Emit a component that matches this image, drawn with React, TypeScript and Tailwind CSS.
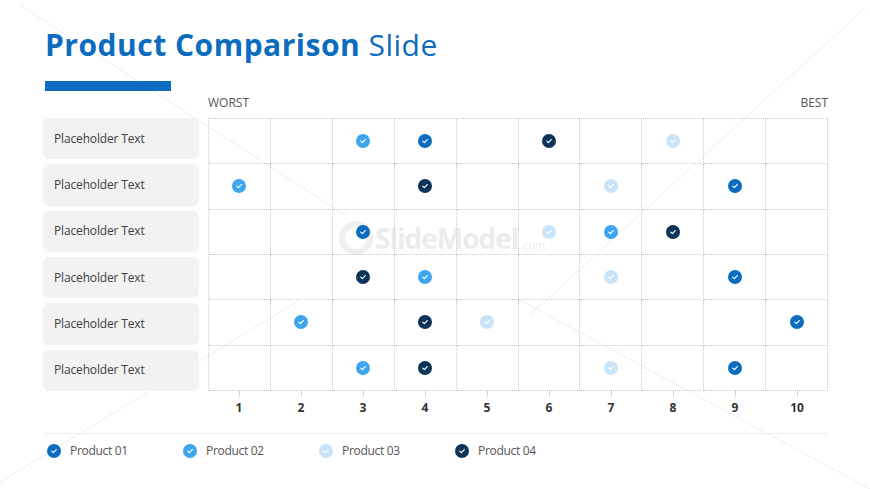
import React from "react";

const COLORS: Record<number, string> = {
  1: "bg-[#0b6cc0]",
  2: "bg-[#3ea6ef]",
  3: "bg-[#c9e4f8]",
  4: "bg-[#0b3558]",
};

// each row: column (1-10) -> product
const rows: Record<number, number>[] = [
  { 3: 2, 4: 1, 6: 4, 8: 3 },
  { 1: 2, 4: 4, 7: 3, 9: 1 },
  { 3: 1, 6: 3, 7: 2, 8: 4 },
  { 3: 4, 4: 2, 7: 3, 9: 1 },
  { 2: 2, 4: 4, 5: 3, 10: 1 },
  { 3: 2, 4: 4, 7: 3, 9: 1 },
];

const cols = [1, 2, 3, 4, 5, 6, 7, 8, 9, 10];

const Check = ({ product }: { product: number }) => (
  <span
    className={`flex w-[14px] h-[14px] rounded-full items-center justify-center ${COLORS[product]}`}
  >
    <svg viewBox="0 0 10 10" className="w-[8px] h-[8px]">
      <path
        d="M2.2 5.2 L4.2 7 L7.8 3.2"
        fill="none"
        stroke="white"
        strokeWidth="1.5"
        strokeLinecap="round"
        strokeLinejoin="round"
      />
    </svg>
  </span>
);

export default function App() {
  return (
    <div
      className="relative w-[870px] h-[489px] overflow-hidden bg-white"
      style={{ fontFamily: '"Open Sans", "Noto Sans", sans-serif' }}
    >
      {/* faint background lines */}
      <svg
        className="absolute inset-0 pointer-events-none"
        width="870"
        height="489"
      >
        <g stroke="#eeeeee" strokeWidth="1">
          <line x1="20" y1="5" x2="345" y2="215" />
          <line x1="0" y1="482" x2="300" y2="300" />
          <line x1="865" y1="8" x2="530" y2="315" />
          <line x1="520" y1="300" x2="870" y2="489" />
        </g>
      </svg>

      <div className="relative flex flex-col pl-[43px] pr-[42px] pt-[26px]">
        <h1 className="ml-[2px] text-[30px] leading-[38px] text-[#0b6cc0] tracking-[0.5px]">
          <span className="font-bold">Product Comparison</span>{" "}
          <span className="font-normal">Slide</span>
        </h1>
        <div className="ml-[2px] mt-[17px] w-[126px] h-[10px] bg-[#0b6cc0]" />

        <div className="ml-[165px] mt-[4px] flex justify-between text-[12px] leading-[16px] text-[#555555]">
          <span>WORST</span>
          <span>BEST</span>
        </div>

        <div className="mt-[7px] flex gap-[9px]">
          {/* labels */}
          <div className="w-[156px] h-[273px] flex flex-col gap-[5px]">
            {rows.map((_, i) => (
              <div
                key={i}
                className="flex-1 rounded-[6px] bg-[#f2f2f2] flex items-center pl-[11px] text-[12px] text-[#404040] tracking-[-0.15px]"
              >
                Placeholder Text
              </div>
            ))}
          </div>

          {/* chart */}
          <div className="w-[620px] flex flex-col">
            <div className="relative h-[273px] grid grid-cols-10 grid-rows-6 border-t border-l border-dotted border-[#c9c9c9]">
              <div className="absolute left-[130px] top-[98px] flex items-center gap-[2px] text-[#ececec] pointer-events-none">
                <span className="w-[34px] h-[34px] rounded-full border-[6px] border-[#efefef]" />
                <span className="text-[28px] font-bold tracking-[-1px]">SlideModel</span>
                <span className="text-[11px] mt-[14px]">.com</span>
              </div>
              {rows.map((row, r) =>
                cols.map((c) => (
                  <div
                    key={`${r}-${c}`}
                    className="relative flex items-center justify-center border-r border-b border-dotted border-[#c9c9c9]"
                  >
                    {row[c] ? <Check product={row[c]} /> : null}
                  </div>
                ))
              )}
            </div>
            <div className="grid grid-cols-10">
              {cols.map((c) => (
                <div key={c} className="flex flex-col items-center">
                  <div className="h-[6px] border-l border-dotted border-[#bdbdbd]" />
                  <span className="mt-[3px] text-[12px] leading-[16px] font-bold text-[#333333]">
                    {c}
                  </span>
                </div>
              ))}
            </div>
          </div>
        </div>

        <div className="mt-[17px] border-t border-[#efefef] pt-[9px] flex">
          {[1, 2, 3, 4].map((p) => (
            <div key={p} className="w-[136px] flex items-center gap-[9px] pl-[4px]">
              <Check product={p} />
              <span className="text-[12px] leading-[16px] text-[#555555] tracking-[-0.3px]">
                Product 0{p}
              </span>
            </div>
          ))}
        </div>
      </div>
    </div>
  );
}
